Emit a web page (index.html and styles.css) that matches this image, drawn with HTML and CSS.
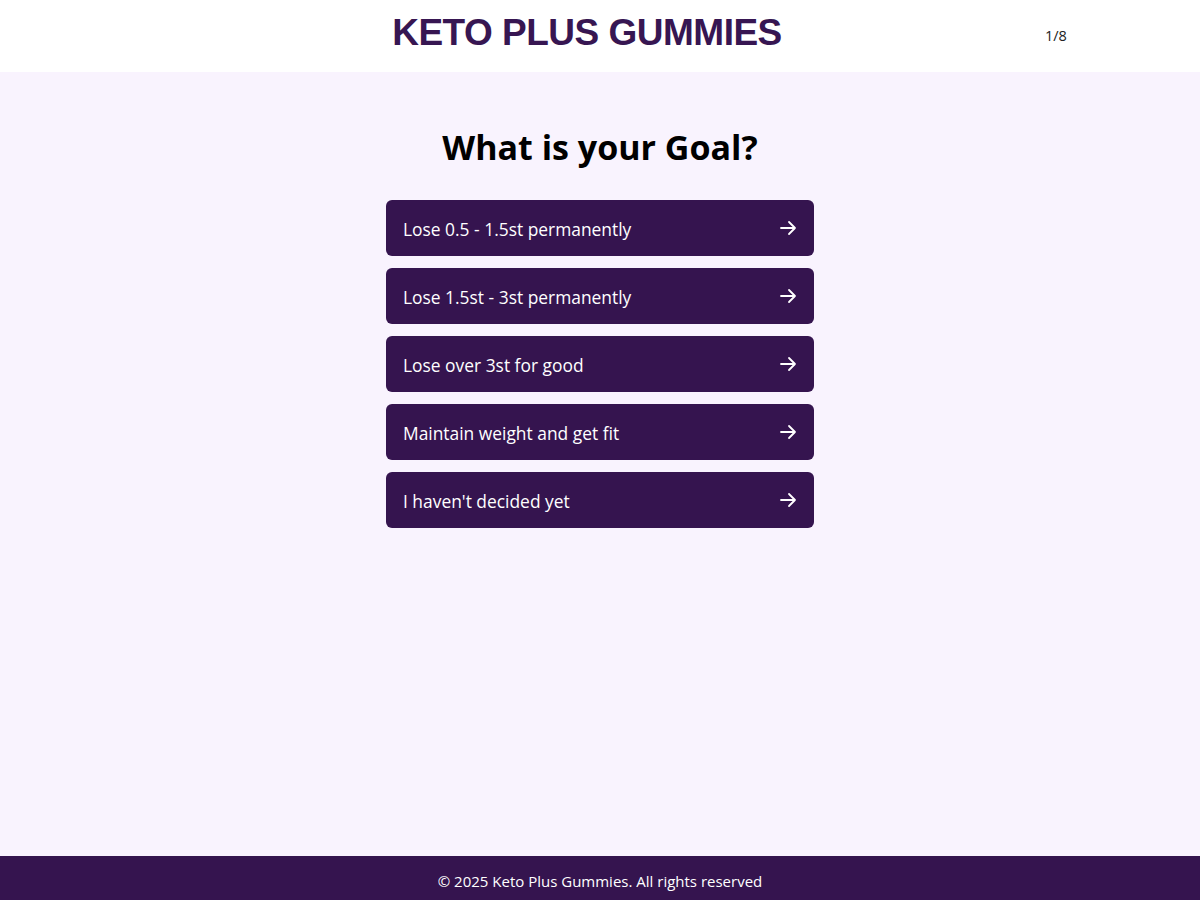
FILE: index.html
```html
<!DOCTYPE html>
<html lang="en">
<head>
	<meta charset="UTF-8">
	<title>Keto Plus Gummies</title>
	<link rel="stylesheet" href="styles.css">
</head>
<body>
	<div class="header">
		<div class="logo">KETO PLUS GUMMIES</div>
		<div class="step">1/8</div>
	</div>
	<div class="main">
		<h1 class="title">What is your Goal?</h1>
		<div class="options">
			<div class="option"><span>Lose 0.5 - 1.5st permanently</span><svg class="arrow" viewBox="0 0 20 20"><path d="M3 10h14M11 4l6 6-6 6"/></svg></div>
			<div class="option"><span>Lose 1.5st - 3st permanently</span><svg class="arrow" viewBox="0 0 20 20"><path d="M3 10h14M11 4l6 6-6 6"/></svg></div>
			<div class="option"><span>Lose over 3st for good</span><svg class="arrow" viewBox="0 0 20 20"><path d="M3 10h14M11 4l6 6-6 6"/></svg></div>
			<div class="option"><span>Maintain weight and get fit</span><svg class="arrow" viewBox="0 0 20 20"><path d="M3 10h14M11 4l6 6-6 6"/></svg></div>
			<div class="option"><span>I haven't decided yet</span><svg class="arrow" viewBox="0 0 20 20"><path d="M3 10h14M11 4l6 6-6 6"/></svg></div>
		</div>
	</div>
	<div class="footer">© 2025 Keto Plus Gummies. All rights reserved</div>
</body>
</html>
```
FILE: styles.css
```css
*{
	padding: 0;
	margin: 0;
	box-sizing: border-box;
}
body{
	background-color: #f9f3fe;
	font-family: "Open Sans", "Noto Sans", sans-serif;
	min-height: 900px;
	display: flex;
	flex-direction: column;
}
.header{
	height: 72px;
	background-color: #fff;
	display: flex;
	align-items: center;
	justify-content: center;
	position: relative;
}
.logo{
	font-family: "Liberation Sans", Arial, sans-serif;
	font-weight: bold;
	font-size: 37px;
	letter-spacing: -0.5px;
	color: #371652;
	margin-left: -26px;
	margin-top: -6px;
}
.step{
	position: absolute;
	left: 1045px;
	top: 26px;
	font-size: 14.5px;
	color: #222;
}
.main{
	flex: 1;
	display: flex;
	flex-direction: column;
	align-items: center;
	padding-top: 52px;
}
.title{
	font-size: 34px;
	font-weight: bold;
	color: #000;
	line-height: 46px;
	margin-bottom: 30px;
}
.options{
	width: 428px;
	display: flex;
	flex-direction: column;
	gap: 12px;
}
.option{
	height: 56px;
	background-color: #35144f;
	border-radius: 6px;
	color: #fff;
	font-size: 17.4px;
	display: flex;
	align-items: center;
	justify-content: space-between;
	padding: 0 16px 0 17px;
}
.option span{
	margin-top: 2px;
}
.arrow{
	width: 20px;
	height: 20px;
	fill: none;
	stroke: #fff;
	stroke-width: 1.8;
	stroke-linecap: round;
	stroke-linejoin: round;
}
.footer{
	height: 44px;
	background-color: #35144f;
	color: #fff;
	font-size: 15px;
	padding-top: 5px;
	display: flex;
	align-items: center;
	justify-content: center;
}
```
